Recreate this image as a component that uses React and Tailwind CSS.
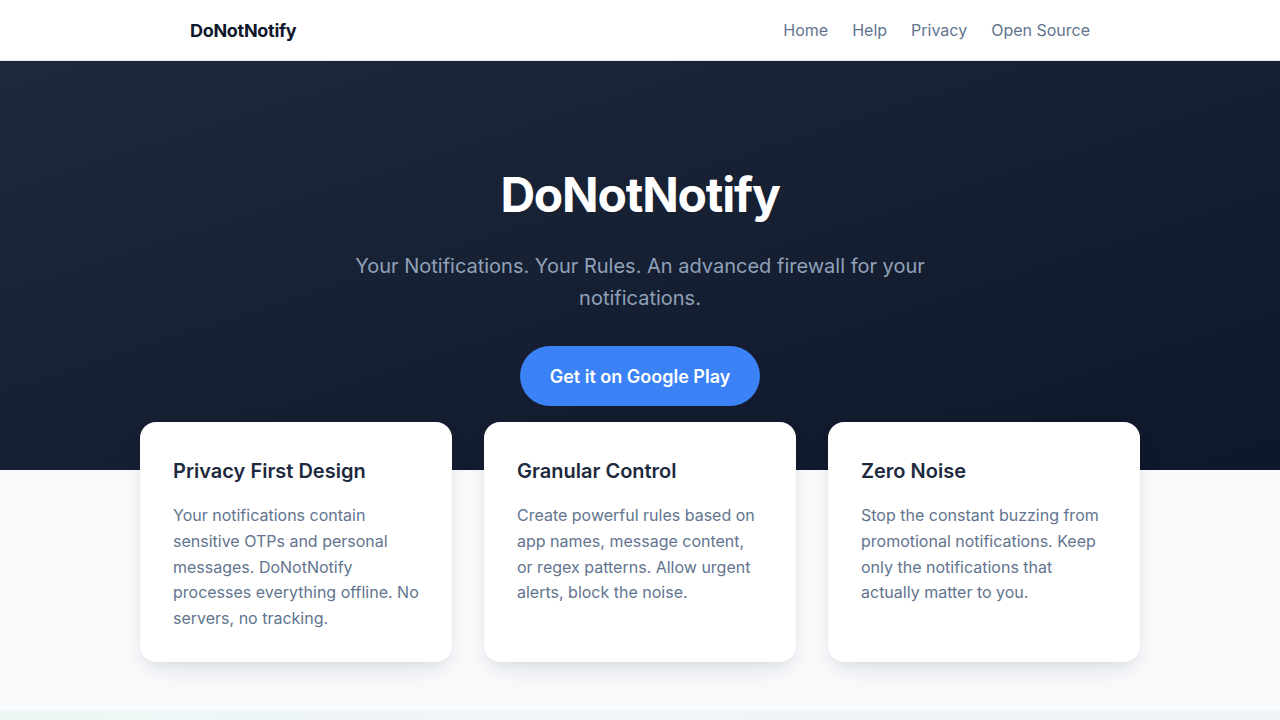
import React from 'react'

const features = [
  {
    title: 'Privacy First Design',
    body: 'Your notifications contain sensitive OTPs and personal messages. DoNotNotify processes everything offline. No servers, no tracking.',
  },
  {
    title: 'Granular Control',
    body: 'Create powerful rules based on app names, message content, or regex patterns. Allow urgent alerts, block the noise.',
  },
  {
    title: 'Zero Noise',
    body: 'Stop the constant buzzing from promotional notifications. Keep only the notifications that actually matter to you.',
  },
]

const Header = () => (
  <header className="bg-white border-b border-slate-200">
    <div className="w-[900px] mx-auto h-[60px] flex items-center justify-between">
      <span className="text-[18px] font-bold text-slate-900 tracking-[-0.3px]">DoNotNotify</span>
      <nav className="flex items-center gap-6 text-[16px] text-slate-500 -mt-px">
        <a href="#">Home</a>
        <a href="#">Help</a>
        <a href="#">Privacy</a>
        <a href="#">Open Source</a>
      </nav>
    </div>
  </header>
)

const Hero = () => (
  <section className="bg-gradient-to-br from-[#1e293b] to-[#0f172a] pt-[105px] pb-16 text-center">
    <h1 className="text-[48px] leading-[58px] font-bold text-white tracking-tight">DoNotNotify</h1>
    <p className="mt-[26px] max-w-[600px] mx-auto text-[20px] leading-[32px] text-slate-400">
      Your Notifications. Your Rules. An advanced firewall for your notifications.
    </p>
    <a
      href="#"
      className="mt-8 inline-flex items-center justify-center h-[60px] px-[30px] rounded-full bg-[#3b82f6] text-white text-[18px] font-semibold"
    >
      Get it on Google Play
    </a>
  </section>
)

const FeatureCard = ({ title, body }) => (
  <div className="bg-white rounded-2xl px-[33px] pt-[35px] pb-[30px] shadow-[0_10px_25px_-5px_rgba(15,23,42,0.12),0_4px_8px_-4px_rgba(15,23,42,0.06)]">
    <h3 className="text-[20px] leading-[28px] font-semibold text-slate-800 mb-[18px]">{title}</h3>
    <p className="text-[16px] leading-[25.8px] text-slate-500">{body}</p>
  </div>
)

export default function App() {
  return (
    <div className="min-h-screen bg-slate-50 font-['Inter',sans-serif]">
      <Header />
      <Hero />
      <section className="pb-12">
        <div className="w-[1000px] mx-auto -mt-12 grid grid-cols-3 gap-8 items-stretch">
          {features.map((f) => (
            <FeatureCard key={f.title} {...f} />
          ))}
        </div>
      </section>
      <section className="bg-gradient-to-r from-[#eef6f5] via-[#f0f5f9] to-[#eef3f8] border-t border-slate-100 h-[200px]" />
    </div>
  )
}
